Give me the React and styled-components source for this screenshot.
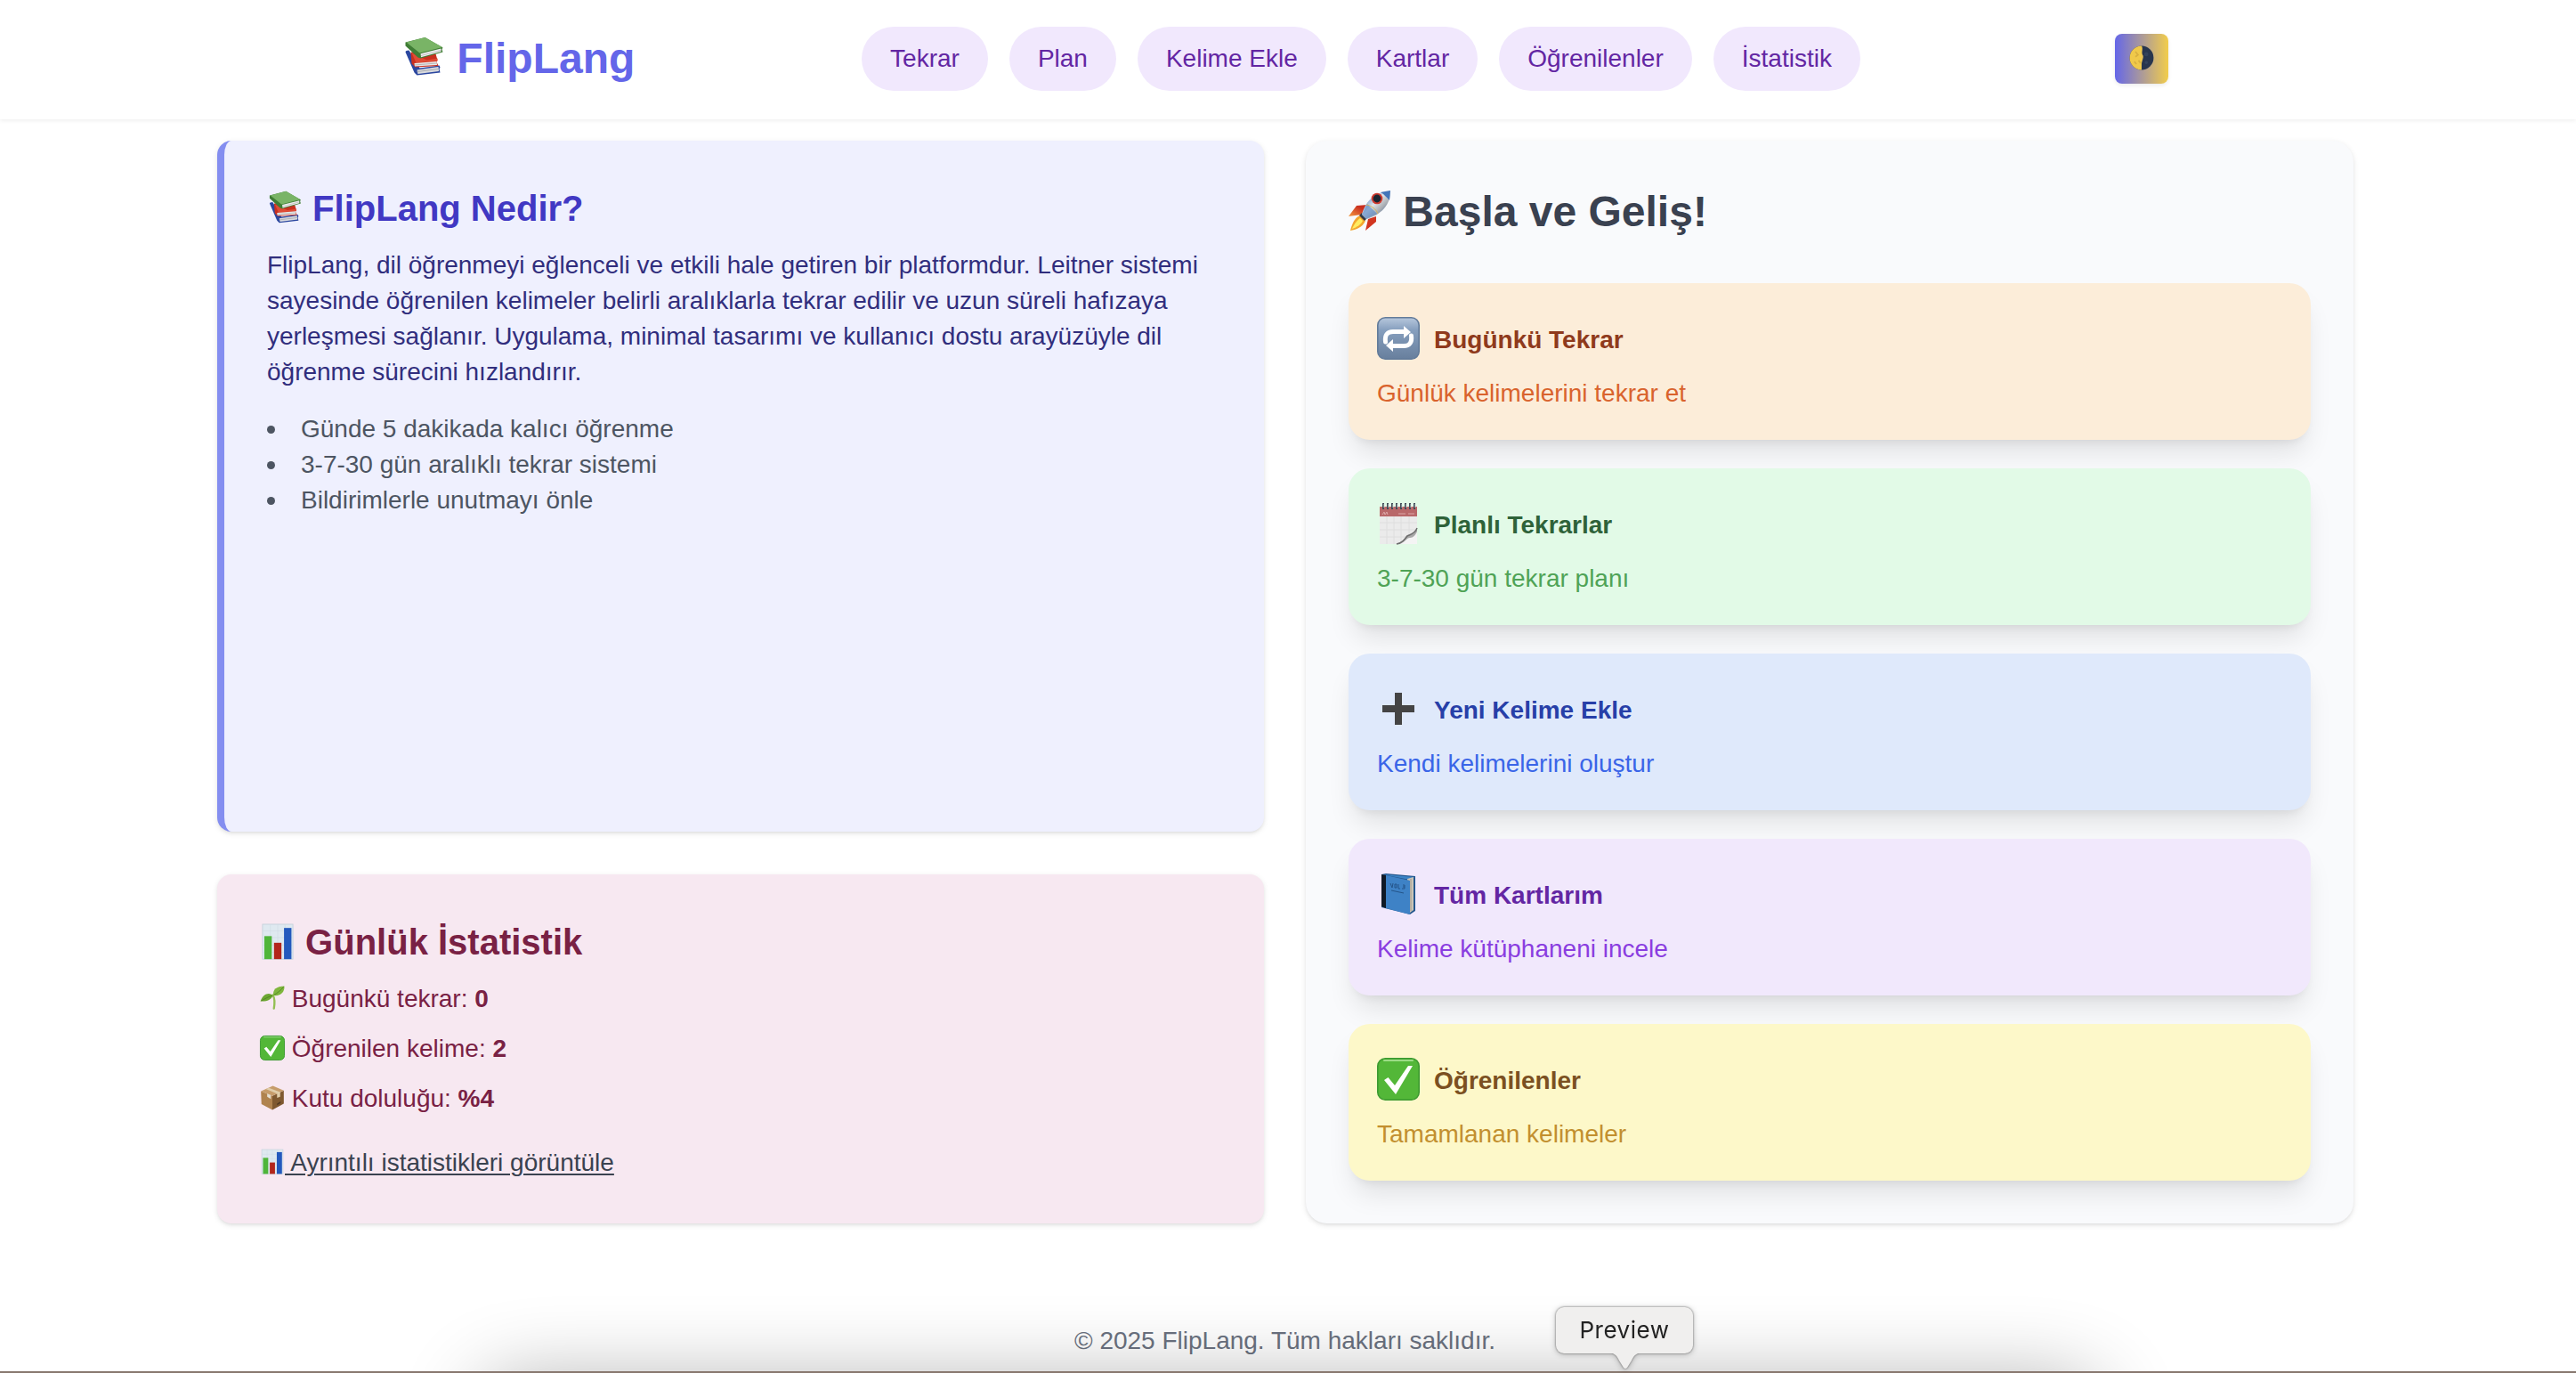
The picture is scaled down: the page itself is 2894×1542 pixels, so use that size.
import React from "react";
import styled, { createGlobalStyle } from "styled-components";

const GlobalStyle = createGlobalStyle`
  *, *::before, *::after { box-sizing: border-box; }
  body {
    margin: 0;
    background: #ffffff;
    font-family: "Liberation Sans", Arial, sans-serif;
    font-size: 28px;
    line-height: 40px;
  }
  h1, h2, h3, p, ul { margin: 0; padding: 0; }
  a { color: inherit; }
`;

const Page = styled.div`
  position: relative;
  width: 2894px;
  height: 1542px;
  overflow: hidden;
  display: flex;
  flex-direction: column;
`;

const Header = styled.header`
  display: flex;
  align-items: center;
  justify-content: space-between;
  height: 134px;
  flex: none;
  padding: 0 458px 2px 452px;
  box-shadow: 0 2px 4px rgba(0, 0, 0, 0.06);
`;

const Logo = styled.h1`
  width: 422px;
  font-size: 48px;
  line-height: 64px;
  font-weight: 700;
  color: #6466e9;
`;

const Nav = styled.nav`
  display: flex;
  gap: 24px;
`;

const NavLink = styled.a`
  padding: 16px 32px;
  border-radius: 36px;
  background: #f1e8fd;
  color: #6326a3;
  text-decoration: none;
  white-space: nowrap;
`;

const ToggleSlot = styled.div`
  display: flex;
  justify-content: flex-end;
  width: 252px;
`;

const ThemeToggle = styled.button`
  width: 60px;
  height: 56px;
  padding: 8px 16px;
  border: 0;
  border-radius: 8px;
  font: inherit;
  background: linear-gradient(to right, #6466e9, #f2cd4b);
  box-shadow: 0 2px 4px rgba(0, 0, 0, 0.08);
`;

const Main = styled.main`
  display: grid;
  grid-template-columns: 1176px 1177px;
  gap: 47px;
  width: 2400px;
  height: 1216px;
  margin: 24px 0 0 244px;
  flex: none;
`;

const Column = styled.div`
  display: flex;
  flex-direction: column;
  gap: 48px;
`;

const softShadow = "0 2px 6px rgba(0, 0, 0, 0.1), 0 2px 4px -2px rgba(0, 0, 0, 0.1)";

const AboutCard = styled.section`
  flex: 1;
  padding: 48px;
  border-left: 8px solid #848ef0;
  border-radius: 16px;
  background: #eff0fe;
  box-shadow: ${softShadow};
`;

const StatsCard = styled.section`
  padding: 48px;
  border-radius: 16px;
  background: #f7e8f1;
  color: #792144;
  box-shadow: ${softShadow};
`;

const CardTitle = styled.h2`
  margin-bottom: 16px;
  font-size: 40px;
  line-height: 56px;
  color: ${(p) => p.$color};
`;

const Lead = styled.p`
  color: #312e7d;
  margin-bottom: 24px;
`;

const Bullets = styled.ul`
  list-style: none;
  color: #4d5562;
`;

const Bullet = styled.li`
  display: flex;
  align-items: center;
  &::before {
    content: "";
    width: 9px;
    height: 9px;
    margin-right: 29px;
    border-radius: 50%;
    background: currentColor;
  }
`;

const Stat = styled.p`
  margin-bottom: 16px;
`;

const StatsLink = styled.a`
  display: block;
  width: max-content;
  margin-top: 32px;
  color: #3a4250;
  text-decoration: underline;
  text-decoration-thickness: 2px;
  text-underline-offset: 3px;
`;

const StartPanel = styled.section`
  padding: 48px;
  border-radius: 24px;
  background: #f9fafc;
  box-shadow: ${softShadow};
`;

const StartTitle = styled.h2`
  margin-bottom: 48px;
  font-size: 48px;
  line-height: 64px;
  color: #3a4150;
`;

const ActionList = styled.div`
  display: flex;
  flex-direction: column;
  gap: 32px;
`;

const ActionCard = styled.a`
  display: block;
  padding: 32px;
  border-radius: 24px;
  background: ${(p) => p.$bg};
  text-decoration: none;
  box-shadow: 0 20px 30px -6px rgba(0, 0, 0, 0.1), 0 8px 12px -8px rgba(0, 0, 0, 0.1);
`;

const ActionHead = styled.div`
  display: flex;
  align-items: center;
  gap: 16px;
  height: 64px;
  margin-bottom: 8px;
`;

const ActionIcon = styled.span`
  display: flex;
  font-size: 48px;
  margin-top: -4px;
`;

const ActionTitle = styled.h3`
  font-size: 28px;
  line-height: 40px;
  color: ${(p) => p.$color};
`;

const ActionText = styled.p`
  color: ${(p) => p.$color};
`;

const Footer = styled.footer`
  margin-top: 112px;
  width: 2887px;
  text-align: center;
  color: #6b7280;
`;

const DockShadow = styled.div`
  position: absolute;
  left: 540px;
  right: 536px;
  top: 1550px;
  height: 140px;
  border-radius: 40px;
  box-shadow: 0 0 90px rgba(0, 0, 0, 0.31);
`;

const DockEdge = styled.div`
  position: absolute;
  left: 0;
  right: 0;
  bottom: 0;
  height: 2px;
  background: #88786f;
`;

const Tooltip = styled.div`
  position: absolute;
  left: 1748px;
  top: 1468px;
  width: 154px;
  height: 52px;
  border-radius: 9px;
  background: #f0efee;
  color: #222222;
  font-family: Inter, sans-serif;
  font-size: 26px;
  letter-spacing: 0.5px;
  line-height: 52px;
  text-align: center;
  filter: drop-shadow(0 0 1px rgba(0, 0, 0, 0.5)) drop-shadow(0 1px 3px rgba(0, 0, 0, 0.25));
`;

const TooltipTail = styled.svg`
  position: absolute;
  left: 61px;
  top: 51px;
  width: 34px;
  height: 19px;
`;

const Glyph = styled.svg`
  width: 1em;
  height: 1em;
  flex: none;
  overflow: visible;
  vertical-align: -0.14em;
`;

const Emoji = ({ children }) => (
  <Glyph viewBox="0 0 48 48" aria-hidden="true">{children}</Glyph>
);

const Books = () => (
  <Emoji>
    <g transform="translate(-.5 -2.500)">
      <path d="M4 20 Q4 18 8 18 L20 38 L42 35 L43 37 L42 39 L43 43 L17 46 L14 43 Z" fill="#2b479f" />
      <path d="M17 40 L41 36.500 L41.500 41.500 L18 44.500 Z" fill="#d9dade" />
      <path d="M17 42 L41 39" stroke="#9b9ea5" strokeWidth=".8" />
      <path d="M10 20 L38 22 L40 29 L39 31 L41 35.500 L15 37 L11 33 Z" fill="#c9301f" />
      <path d="M11 21 L28 29 L40 27 L40 30 L16 32 Z" fill="#df4b35" />
      <path d="M14 32.500 L39 30.500 L39.500 34.500 L14.500 36 Z" fill="#e9e9e9" />
      <path d="M14 34.500 L39 32.500" stroke="#a7a7a7" strokeWidth=".8" />
      <path d="M4 9 L26 3.500 L46 15 L45 17 L46 20 L21 27 L18 26 L4 13 Z" fill="#3f7d35" />
      <path d="M5 9 L26 3.500 L45.500 14.500 L20 21 Z" fill="#79b466" />
      <path d="M21 21.800 L44 16 L44 19.500 L21.500 25.800 Z" fill="#efefef" />
      <path d="M21.500 24 L44 18" stroke="#aaa" strokeWidth=".7" />
    </g>
  </Emoji>
);

const Chart = () => (
  <Emoji>
    <rect x="3.500" y="0" width="41" height="47" fill="#dfe9f0" stroke="#c3d0da" strokeWidth="1" />
    <path d="M4 9H44M4 18H44M4 28H44M4 38H44M14 0V47M24 0V47M34 0V47" stroke="#cedae3" strokeWidth=".7" />
    <rect x="6" y="16" width="10" height="31" fill="#4fb53a" />
    <rect x="19" y="25" width="10" height="22" fill="#b3261c" />
    <rect x="32.500" y="5" width="10" height="42" fill="#2459bd" />
  </Emoji>
);

const Seedling = () => (
  <Emoji>
    <g transform="translate(0 -1)">
      <path d="M27 45 C29 33 29 26 25 19" fill="none" stroke="#93bf53" strokeWidth="4" strokeLinecap="round" />
      <path d="M25 20 C17 12 5 18 1 31 C12 32 22 29 25 20 Z" fill="#6da732" />
      <path d="M26 20 C24 9 32 2 47 2 C48 13 40 22 26 20 Z" fill="#7fb63d" />
      <path d="M3 30 C10 26 17 22 24 20 M27 19 C34 15 40 10 46 3" fill="none" stroke="#4f8423" strokeWidth="1.500" />
    </g>
  </Emoji>
);

const Check = () => (
  <Emoji>
    <rect x=".8" y=".8" width="46.400" height="46.400" rx="8.500" fill="#53b738" stroke="#3c9a31" strokeWidth="1.600" />
    <path d="M8 3H40" stroke="#9bdc85" strokeWidth="2" strokeLinecap="round" />
    <path d="M8 25 L12.500 22 L20 31 L35 9 L40 9 L21 41 Z" fill="#ffffff" />
  </Emoji>
);

const Box = () => (
  <Emoji>
    <path d="M2 11 L24 20 V47 L3 36 Z" fill="#b0834f" />
    <path d="M24 20 L46 10 V35 L24 47 Z" fill="#7f5930" />
    <path d="M2 11 L25 1 L46 10 L24 20 Z" fill="#c69c6b" />
    <path d="M11 7 L17 4.500 L39 13 L39 22 L33 24 L33 16 Z" fill="#e0cda9" />
    <path d="M14 16 L21 19 V26 L14 22 Z" fill="#e5dfd2" />
    <path d="M33 35 L40 31 V34 L33 38 Z" fill="#4e3720" />
  </Emoji>
);

const Rocket = () => (
  <Emoji>
    <defs>
      <linearGradient id="rocket-body" x1="0" y1="0" x2="1" y2="1">
        <stop offset=".15" stopColor="#4f86cd" />
        <stop offset=".45" stopColor="#dfe3e7" />
        <stop offset=".65" stopColor="#a9adb2" />
        <stop offset=".9" stopColor="#2d5c9e" />
      </linearGradient>
      <linearGradient id="rocket-fin" x1="1" y1="0" x2="0" y2="1">
        <stop offset=".3" stopColor="#c92f20" />
        <stop offset="1" stopColor="#f59a3f" />
      </linearGradient>
    </defs>
    <path d="M21 17 L9 18 L0 30 L15 28 Z" fill="url(#rocket-fin)" />
    <path d="M31 30 L31 36 L19 46 L22 33 Z" fill="#d23520" />
    <path d="M13 29 C7 31 4 38 2 46 C9 45 16 42 19 35 Z" fill="#f3a62f" />
    <path d="M13 32 C9 35 6 39 4 44 C10 42 14 39 16 35 Z" fill="#ffec61" />
    <path d="M12 29 L15 26 L21 32 L18 35 Z" fill="#353b45" />
    <path d="M15 28 C19 12 31 2 47 1 C48 16 36 29 20 33 Z" fill="url(#rocket-body)" />
    <path d="M15 28 L21 16 L32 27 L20 33 Z" fill="#5b88c5" opacity=".65" />
    <path d="M36 3 L47 1 L46 12 C43 9 40 5 36 3 Z" fill="#4275b9" />
    <path d="M20 17 C26 18 31 22 33 27" fill="none" stroke="#d4b35b" strokeWidth="1" />
    <circle cx="32" cy="10" r="6.300" fill="#cf3b30" />
    <circle cx="32" cy="10" r="4.400" fill="#1a2531" />
  </Emoji>
);

const Repeat = () => (
  <Emoji>
    <defs>
      <linearGradient id="repeat-tile" x1="0" y1="0" x2="0" y2="1">
        <stop offset="0" stopColor="#b6c7dc" />
        <stop offset=".3" stopColor="#869fbe" />
        <stop offset="1" stopColor="#687f9d" />
      </linearGradient>
    </defs>
    <rect x=".8" y=".8" width="46.400" height="46.400" rx="8.500" fill="url(#repeat-tile)" stroke="#627b9a" strokeWidth="1.600" />
    <path d="M9.500 28 Q8 16.500 18 16.500 H31 M38.500 21 Q40 32.500 30 32.500 H17" fill="none" stroke="#fff" strokeWidth="5" strokeLinecap="round" />
    <path d="M30 10 L38 17 L30 24 Z M18 25 L10 32 L18 39 Z" fill="#fff" />
  </Emoji>
);

const Calendar = () => (
  <Emoji>
    <rect x="3" y="5" width="42" height="42" fill="#ebebeb" />
    <path d="M3 5 H45 V16 H3 Z" fill="#b9686a" />
    <path d="M6 14 L8 11 L9 14 L11 11 L12 14 M24 13H32M35 13H42" fill="none" stroke="#dca6a7" strokeWidth="1" />
    <path d="M3 23H45M3 31H45M3 39H36M11 16V47M19 16V47M27 16V45M36 16V37" stroke="#dedede" strokeWidth="1" />
    <path d="M45 29 V47 H19 C31 47 31 38 34 37 C40 37 43 34 45 29 Z" fill="#a8a8a8" />
    <path d="M45 33 V47 H25 C32 45 33 40 37 40 C41 40 43 37 45 33 Z" fill="#f4f4f4" />
    <path d="M45 29 C43 35 38 36 34 38 C31 42 28 46 22 47" fill="none" stroke="#6d6d6d" strokeWidth="1.500" />
    <path d="M7 1V8M12 1V8M17 1V8M22 1V8M27 1V8M32 1V8M37 1V8M42 1V8" stroke="#414c57" strokeWidth="2" />
    <path d="M8 2V6M13 2V6M18 2V6M23 2V6M28 2V6M33 2V6M38 2V6M43 2V6" stroke="#dce2e5" strokeWidth=".8" />
  </Emoji>
);

const Plus = () => (
  <Emoji>
    <path d="M20 6H28V20H42V28H28V42H20V28H6V20H20Z" fill="#444444" />
  </Emoji>
);

const BlueBook = () => (
  <Emoji>
    <path d="M5 2 L10 1 L43 4 L43 43 L37 47 L5 39 Z" fill="#24578d" />
    <path d="M7 2 L42 5 L37 8 L11 3 Z" fill="#3b83c5" />
    <path d="M34 7 L41 5 V42 L37 45 Z" fill="#cac4b6" />
    <path d="M35 8 V44 M38 7 V43" stroke="#8f8b82" strokeWidth=".7" />
    <path d="M10 3 L37 9 V47 L10 40 Z" fill="#3e82c6" />
    <path d="M5 2 L10 3 V40 L5 38 Z" fill="#101a25" />
    <path d="M15 12 L17 17 L18 12 M20 13 V17 H22 V13 H20 M24 13 V18 H26 M29 14 H31 V18 H28 M29 16 H31 M16 20 L30 23" fill="none" stroke="#24558a" strokeWidth="1" />
  </Emoji>
);

const Moon = () => (
  <Emoji>
    <circle cx="24" cy="24" r="23" fill="#28364e" />
    <path d="M24 1 A23 23 0 0 0 24 47 Z" fill="#f0c94a" />
    <path d="M24 1 C28 8 22 14 27 20 C28 27 22 31 24 47 Z" fill="#e5bf55" />
    <path d="M12 12 L17 18 L12 22 M18 29 L22 34 M10 31 L14 36" fill="none" stroke="#d9b040" strokeWidth="3" />
    <circle cx="33" cy="17" r="4" fill="#33435c" />
    <circle cx="33" cy="33" r="3" fill="#33435c" />
  </Emoji>
);

const navItems = ["Tekrar", "Plan", "Kelime Ekle", "Kartlar", "Öğrenilenler", "İstatistik"];

const bullets = [
  "Günde 5 dakikada kalıcı öğrenme",
  "3-7-30 gün aralıklı tekrar sistemi",
  "Bildirimlerle unutmayı önle",
];

const stats = [
  { icon: Seedling, label: "Bugünkü tekrar:", value: "0" },
  { icon: Check, label: "Öğrenilen kelime:", value: "2" },
  { icon: Box, label: "Kutu doluluğu:", value: "%4" },
];

const actions = [
  { icon: Repeat, title: "Bugünkü Tekrar", text: "Günlük kelimelerini tekrar et", bg: "#fcedd9", dark: "#8f3a1c", mid: "#d9632d" },
  { icon: Calendar, title: "Planlı Tekrarlar", text: "3-7-30 gün tekrar planı", bg: "#e2fae7", dark: "#2e6239", mid: "#4fa356" },
  { icon: Plus, title: "Yeni Kelime Ekle", text: "Kendi kelimelerini oluştur", bg: "#dfe9fb", dark: "#273fa8", mid: "#3a65e8" },
  { icon: BlueBook, title: "Tüm Kartlarım", text: "Kelime kütüphaneni incele", bg: "#f1e8fc", dark: "#6326a3", mid: "#8a3de0" },
  { icon: Check, title: "Öğrenilenler", text: "Tamamlanan kelimeler", bg: "#fdf8c9", dark: "#7b5021", mid: "#c28f2f" },
];

export default function App() {
  return (
    <Page>
      <GlobalStyle />
      <Header>
        <Logo><Books /> FlipLang</Logo>
        <Nav>
          {navItems.map((item) => <NavLink key={item}>{item}</NavLink>)}
        </Nav>
        <ToggleSlot>
          <ThemeToggle><Moon /></ThemeToggle>
        </ToggleSlot>
      </Header>
      <Main>
        <Column>
          <AboutCard>
            <CardTitle $color="#4138c3"><Books /> FlipLang Nedir?</CardTitle>
            <Lead>
              FlipLang, dil öğrenmeyi eğlenceli ve etkili hale getiren bir platformdur. Leitner sistemi
              sayesinde öğrenilen kelimeler belirli aralıklarla tekrar edilir ve uzun süreli hafızaya
              yerleşmesi sağlanır. Uygulama, minimal tasarımı ve kullanıcı dostu arayüzüyle dil
              öğrenme sürecini hızlandırır.
            </Lead>
            <Bullets>
              {bullets.map((text) => <Bullet key={text}>{text}</Bullet>)}
            </Bullets>
          </AboutCard>
          <StatsCard>
            <CardTitle $color="#792144"><Chart /> Günlük İstatistik</CardTitle>
            {stats.map(({ icon: Icon, label, value }) => (
              <Stat key={label}><Icon /> {label} <strong>{value}</strong></Stat>
            ))}
            <StatsLink><Chart /> Ayrıntılı istatistikleri görüntüle</StatsLink>
          </StatsCard>
        </Column>
        <StartPanel>
          <StartTitle><Rocket /> Başla ve Geliş!</StartTitle>
          <ActionList>
            {actions.map(({ icon: Icon, title, text, bg, dark, mid }) => (
              <ActionCard key={title} $bg={bg}>
                <ActionHead>
                  <ActionIcon><Icon /></ActionIcon>
                  <ActionTitle $color={dark}>{title}</ActionTitle>
                </ActionHead>
                <ActionText $color={mid}>{text}</ActionText>
              </ActionCard>
            ))}
          </ActionList>
        </StartPanel>
      </Main>
      <Footer>© 2025 FlipLang. Tüm hakları saklıdır.</Footer>
      <DockShadow />
      <DockEdge />
      <Tooltip>
        Preview
        <TooltipTail viewBox="0 0 34 19">
          <path d="M0 0 H34 C27 2 26 5 24 9 L19 17 Q17 19 15 17 L10 9 C8 5 7 2 0 0 Z" fill="#f0efee" />
        </TooltipTail>
      </Tooltip>
    </Page>
  );
}
